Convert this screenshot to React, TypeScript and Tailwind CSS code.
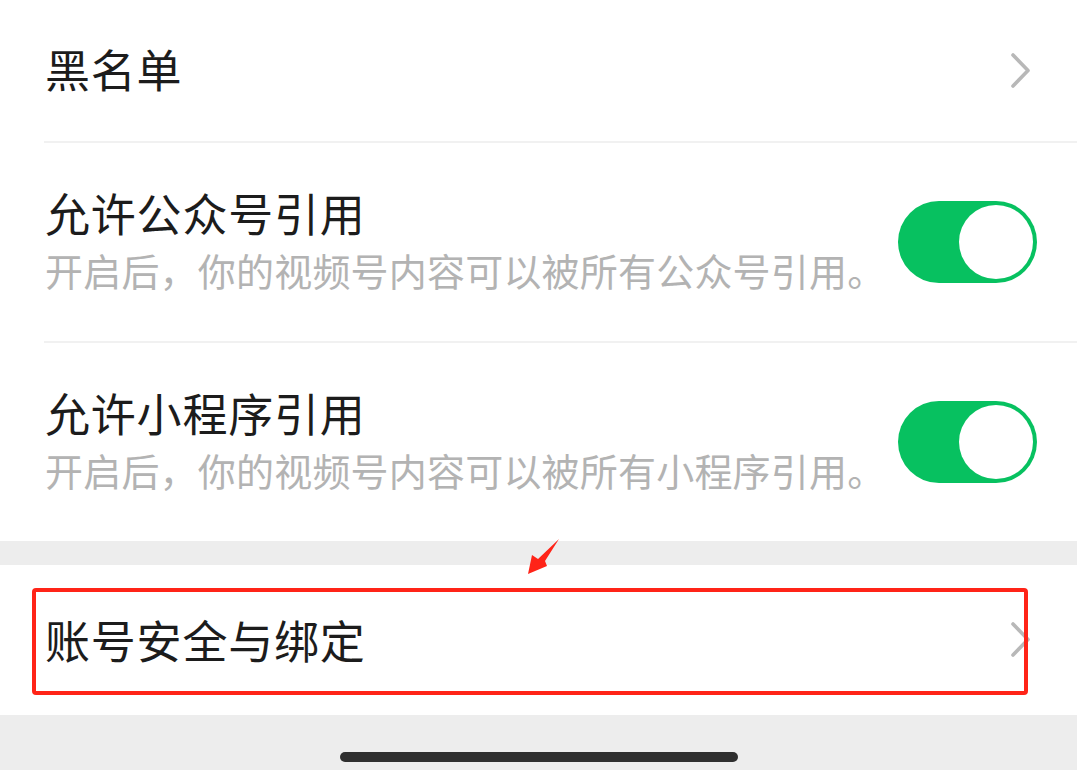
import React from "react";

const font = { fontFamily: '"Noto Sans CJK SC", "Noto Sans", sans-serif' };

function Chevron() {
  return (
    <svg width="22" height="38" viewBox="0 0 22 38" className="shrink-0">
      <path d="M3 3 L18 18.5 L3 34" fill="none" stroke="#b8b8b8" strokeWidth="3.6" strokeLinecap="round" strokeLinejoin="round" />
    </svg>
  );
}

function Toggle() {
  return (
    <div className="w-[139px] h-[82px] rounded-full bg-[#07c160] flex items-center justify-end pr-[4px] shrink-0">
      <div className="w-[74px] h-[74px] rounded-full bg-white" />
    </div>
  );
}

function ToggleRow({ title, desc, divider, h }: { title: string; desc: string; divider: boolean; h: string }) {
  return (
    <div className={`flex items-center justify-between pr-[40px] ${h} ${divider ? "border-b-2 border-[#f1f1f1]" : ""}`}>
      <div className="pl-[1px]">
        <div className="text-[45px] tracking-[0.8px] leading-[56px] text-[#1c1c1c]">{title}</div>
        <div className="text-[38px] tracking-[0.2px] leading-[58px] text-[#b3b3b3]">{desc}</div>
      </div>
      <Toggle />
    </div>
  );
}

export default function App() {
  return (
    <div className="relative w-[1077px] h-[770px] bg-[#ededed] overflow-hidden flex flex-col" style={font}>
      <div className="bg-white pl-[44px]">
        <div className="h-[143px] flex items-center justify-between pr-[45px] border-b-2 border-[#f1f1f1]">
          <div className="text-[45px] tracking-[0.8px] leading-[56px] text-[#1c1c1c] pl-[1px] pb-[3px]">黑名单</div>
          <Chevron />
        </div>
        <ToggleRow h="h-[200px]" divider title="允许公众号引用" desc="开启后，你的视频号内容可以被所有公众号引用。" />
        <ToggleRow h="h-[198px]" divider={false} title="允许小程序引用" desc="开启后，你的视频号内容可以被所有小程序引用。" />
      </div>
      <div className="h-[24px]" />
      <div className="bg-white h-[150px] pl-[45px] pr-[45px] flex items-center justify-between">
        <div className="text-[45px] tracking-[0.8px] leading-[56px] text-[#1c1c1c]">账号安全与绑定</div>
        <Chevron />
      </div>
      <div className="flex-1 flex justify-center pt-[37px]">
        <div className="w-[398px] h-[10px] rounded-full bg-[#2f2f2f]" />
      </div>

      <div className="absolute left-[32px] top-[588px] w-[996px] h-[107px] border-[4px] border-[#ff2418] rounded-[4px]" />
      <svg className="absolute left-[520px] top-[530px]" width="48" height="50" viewBox="0 0 48 50">
        <polygon points="39,9 25,31 27,36 8,44 12,25 18,29" fill="#ff2418" />
      </svg>
    </div>
  );
}
